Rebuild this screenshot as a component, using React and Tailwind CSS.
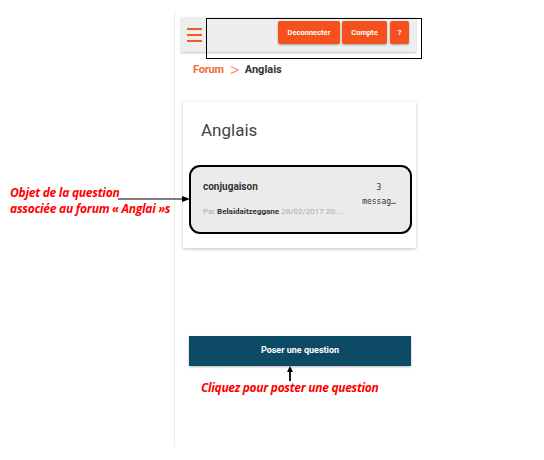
import React from "react";

export default function App() {
  return (
    <div className="relative w-[544px] h-[460px] bg-white overflow-hidden" style={{ fontFamily: "Roboto, 'Liberation Sans', sans-serif" }}>
      {/* phone column */}
      <div className="absolute left-[174px] top-[10px] w-[242px] h-[437px] border-l border-[#ececec] flex flex-col">
        {/* top bar */}
        <div className="mt-[7px] ml-[6px] h-[35px] bg-[#eeeeee] shadow-[0_1px_2px_rgba(0,0,0,0.25)] flex items-center pl-[6px] pr-[7px]">
          <div className="flex flex-col gap-[4px] w-[15px]">
            <div className="h-[2px] bg-[#f05a28]" />
            <div className="h-[2px] bg-[#f05a28]" />
            <div className="h-[2px] bg-[#f05a28]" />
          </div>
          <div className="ml-auto flex gap-[2px] -mt-[4px]">
            <div className="h-[23px] w-[62px] bg-[#f4511e] rounded-[2px] text-white text-[7.5px] font-bold flex items-center justify-center shadow-[0_1px_2px_rgba(0,0,0,0.3)]">Deconnecter</div>
            <div className="h-[23px] w-[45px] bg-[#f4511e] rounded-[2px] text-white text-[7.5px] font-bold flex items-center justify-center shadow-[0_1px_2px_rgba(0,0,0,0.3)]">Compte</div>
            <div className="h-[23px] w-[19px] bg-[#f4511e] rounded-[2px] text-white text-[7.5px] font-bold flex items-center justify-center ml-[1px] shadow-[0_1px_2px_rgba(0,0,0,0.3)]">?</div>
          </div>
        </div>
        {/* breadcrumb */}
        <div className="mt-[11px] ml-[18px] flex items-center text-[11px] font-bold h-[14px]">
          <span className="text-[#f26b3a] tracking-[-0.2px]">Forum</span>
          <span className="text-[#f58a62] font-light text-[19px] leading-[14px] ml-[6px] mr-[5px] -mt-[1px]">&gt;</span>
          <span className="text-[#333]">Anglais</span>
        </div>
        {/* card */}
        <div className="mt-[25px] ml-[8px] w-[233px] h-[146px] bg-white shadow-[0_1px_3px_rgba(0,0,0,0.25)] flex flex-col">
          <div className="mt-[17px] ml-[18px] text-[17px] text-[#444] leading-[22px]">Anglais</div>
          <div className="mt-[24px] ml-[6px] w-[223px] h-[69px] bg-[#ebebeb] border-2 border-black rounded-[11px] flex items-start pl-[12px] pr-[16px]">
            <div className="flex flex-col flex-1">
              <div className="mt-[14px] text-[10px] font-bold text-[#333] leading-[12px]">conjugaison</div>
              <div className="mt-[14px] text-[8px] text-[#aaa] leading-[10px] whitespace-nowrap">Par <span className="font-bold text-[#333]">Belaidaitzeggane</span> 28/02/2017 20:...</div>
            </div>
            <div className="mt-[14px] w-[30px] flex flex-col items-center text-[8px] text-[#333] leading-[14px]" style={{ fontFamily: "'DejaVu Sans Mono', monospace" }}>
              <span>3</span>
              <span>messag…</span>
            </div>
          </div>
        </div>
        {/* button */}
        <div className="mt-[88px] ml-[14px] w-[222px] h-[30px] bg-[#0d4a66] shadow-[0_1px_2px_rgba(0,0,0,0.3)] text-white text-[9px] font-bold flex items-center justify-center">Poser une question</div>
      </div>

      {/* annotation rectangle */}
      <div className="absolute left-[206px] top-[18px] w-[216px] h-[41px] border border-black" />

      {/* left annotation */}
      <div className="absolute left-[10px] top-[185px] text-[12px] font-bold italic text-[#ff0000] leading-[16px] tracking-[-0.25px]" style={{ fontFamily: "'Open Sans', sans-serif" }}>
        <div>Objet de la question</div>
        <div>associée au forum « Anglai »s</div>
      </div>
      <svg className="absolute left-[116px] top-[194px]" width="76" height="10">
        <line x1="2" y1="5" x2="68" y2="5" stroke="black" strokeWidth="1.2" />
        <polygon points="74,5 66,2 66,8" fill="black" />
      </svg>

      {/* bottom annotation */}
      <svg className="absolute left-[286px] top-[366px]" width="8" height="16">
        <line x1="4" y1="4" x2="4" y2="15" stroke="black" strokeWidth="1.8" />
        <polygon points="4,0 1,6 7,6" fill="black" />
      </svg>
      <div className="absolute left-[201px] top-[380px] text-[12px] font-bold italic text-[#ff0000] leading-[16px] tracking-[-0.3px]" style={{ fontFamily: "'Open Sans', sans-serif" }}>
        Cliquez pour poster une question
      </div>
    </div>
  );
}
